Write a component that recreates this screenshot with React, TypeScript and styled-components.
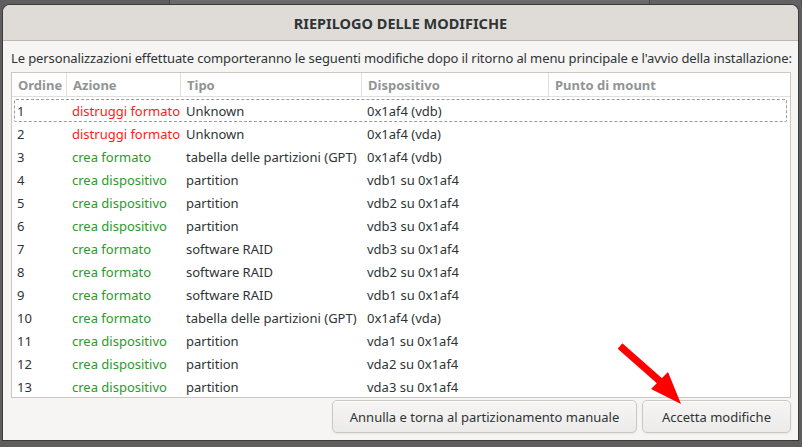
import { FC } from 'react';
import styled, { createGlobalStyle } from 'styled-components';

const GlobalStyle = createGlobalStyle`
  html, body {
    margin: 0;
    padding: 0;
    background: #5c5c5c;
  }
  body {
    font-family: "Noto Sans", "Open Sans", sans-serif;
    font-size: 13px;
    color: #2e3436;
  }
`;

const Screen = styled.div`
  width: 802px;
  height: 447px;
  overflow: hidden;
  background: #5e5e5e;
  display: flex;
  flex-direction: column;
  position: relative;
`;

const Backdrop = styled.div`
  height: 5px;
  display: flex;
  flex-shrink: 0;
`;

const BackPane = styled.div<{ $w: number; $bg: string }>`
  width: ${(p) => p.$w}px;
  background: ${(p) => p.$bg};
  border-right: 1px solid #4a4a4a;
`;

const Dialog = styled.div`
  flex: 1;
  margin: 0 4px 7px 3px;
  border-radius: 7px 7px 0 0;
  background: #f6f5f4;
  display: flex;
  flex-direction: column;
  overflow: hidden;
  box-shadow: 0 0 0 1px #3b3b3b;
`;

const TitleBar = styled.div`
  height: 35px;
  flex-shrink: 0;
  background: #dfdcd8;
  border-bottom: 1px solid #bfb8b1;
  display: flex;
  align-items: center;
  justify-content: center;
  font-weight: bold;
  font-size: 14.5px;
  color: #2e3436;
`;

const Body = styled.div`
  flex: 1;
  display: flex;
  flex-direction: column;
  padding: 0 7px 7px 8px;
`;

const Intro = styled.div`
  height: 29px;
  display: flex;
  align-items: center;
  padding-top: 2px;
  white-space: nowrap;
  letter-spacing: -0.11px;
`;

const Table = styled.div`
  height: 324px;
  border: 1px solid #cdc7c2;
  background: #ffffff;
  overflow: hidden;
  display: flex;
  flex-direction: column;
`;

const cols = '55px 114px 181px 187px 1fr';

const HeadRow = styled.div`
  display: grid;
  grid-template-columns: ${cols};
  height: 23px;
  border-bottom: 1px solid #e1dedb;
  flex-shrink: 0;
`;

const HeadCell = styled.div<{ $last?: boolean }>`
  display: flex;
  align-items: center;
  padding-left: 6px;
  font-weight: bold;
  color: #919494;
  border-right: ${(p) => (p.$last ? 'none' : '1px solid #e1dedb')};
  white-space: nowrap;
`;

const Rows = styled.div`
  padding-top: 2px;
  display: flex;
  flex-direction: column;
`;

const Row = styled.div<{ $focus?: boolean }>`
  display: grid;
  grid-template-columns: ${cols};
  height: 23px;
  flex-shrink: 0;
  margin: 0 3px 0 2px;
  outline: ${(p) => (p.$focus ? '1px dashed #9a9a9a' : 'none')};
  outline-offset: -1px;
  border-radius: 2px;
`;

const Cell = styled.div<{ $color?: string }>`
  display: flex;
  align-items: center;
  padding-left: 3px;
  color: ${(p) => p.$color ?? '#2e3436'};
  white-space: nowrap;
  overflow: hidden;
`;

const Buttons = styled.div`
  display: flex;
  justify-content: flex-end;
  gap: 5px;
  margin-top: 2px;
`;

const Button = styled.button<{ $w: number }>`
  width: ${(p) => p.$w}px;
  height: 33px;
  border: 1px solid #cdc7c2;
  border-radius: 5px;
  background: linear-gradient(#f6f5f4, #edebe9);
  box-shadow: inset 0 1px #ffffff, 0 1px 2px rgba(0, 0, 0, 0.07);
  font-family: inherit;
  font-size: 13px;
  color: #2e3436;
  padding: 0;
`;

const Arrow = styled.svg`
  position: absolute;
  left: 0;
  top: 0;
  pointer-events: none;
`;

const RED = '#ff1a1a';
const GREEN = '#2a9a2a';

type Change = { n: number; action: string; destroy?: boolean; type: string; device: string };

const changes: Change[] = [
  { n: 1, action: 'distruggi formato', destroy: true, type: 'Unknown', device: '0x1af4 (vdb)' },
  { n: 2, action: 'distruggi formato', destroy: true, type: 'Unknown', device: '0x1af4 (vda)' },
  { n: 3, action: 'crea formato', type: 'tabella delle partizioni (GPT)', device: '0x1af4 (vdb)' },
  { n: 4, action: 'crea dispositivo', type: 'partition', device: 'vdb1 su 0x1af4' },
  { n: 5, action: 'crea dispositivo', type: 'partition', device: 'vdb2 su 0x1af4' },
  { n: 6, action: 'crea dispositivo', type: 'partition', device: 'vdb3 su 0x1af4' },
  { n: 7, action: 'crea formato', type: 'software RAID', device: 'vdb3 su 0x1af4' },
  { n: 8, action: 'crea formato', type: 'software RAID', device: 'vdb2 su 0x1af4' },
  { n: 9, action: 'crea formato', type: 'software RAID', device: 'vdb1 su 0x1af4' },
  { n: 10, action: 'crea formato', type: 'tabella delle partizioni (GPT)', device: '0x1af4 (vda)' },
  { n: 11, action: 'crea dispositivo', type: 'partition', device: 'vda1 su 0x1af4' },
  { n: 12, action: 'crea dispositivo', type: 'partition', device: 'vda2 su 0x1af4' },
  { n: 13, action: 'crea dispositivo', type: 'partition', device: 'vda3 su 0x1af4' },
];

const headers = ['Ordine', 'Azione', 'Tipo', 'Dispositivo', 'Punto di mount'];

const App: FC = () => {
  return (
    <Screen>
      <GlobalStyle />
      <Backdrop>
        <BackPane $w={170} $bg="#5f5f5f" />
        <BackPane $w={480} $bg="#6a6a6a" />
        <BackPane $w={152} $bg="#626262" />
      </Backdrop>
      <Dialog>
        <TitleBar>RIEPILOGO DELLE MODIFICHE</TitleBar>
        <Body>
          <Intro>
            Le personalizzazioni effettuate comporteranno le seguenti modifiche dopo il ritorno al menu principale e l'avvio della installazione:
          </Intro>
          <Table>
            <HeadRow>
              {headers.map((h, i) => (
                <HeadCell key={h} $last={i === headers.length - 1}>
                  {h}
                </HeadCell>
              ))}
            </HeadRow>
            <Rows>
              {changes.map((c) => (
                <Row key={c.n} $focus={c.n === 1}>
                  <Cell>{c.n}</Cell>
                  <Cell $color={c.destroy ? RED : GREEN}>{c.action}</Cell>
                  <Cell>{c.type}</Cell>
                  <Cell>{c.device}</Cell>
                  <Cell />
                </Row>
              ))}
            </Rows>
          </Table>
          <Buttons>
            <Button $w={305}>Annulla e torna al partizionamento manuale</Button>
            <Button $w={149}>Accetta modifiche</Button>
          </Buttons>
        </Body>
      </Dialog>
      <Arrow width="802" height="447" viewBox="0 0 802 447">
        <line x1="620" y1="346" x2="662" y2="383" stroke="#ff0000" strokeWidth="7" />
        <polygon points="651,389 668,372 681,404" fill="#ff0000" />
      </Arrow>
    </Screen>
  );
};

export default App;
